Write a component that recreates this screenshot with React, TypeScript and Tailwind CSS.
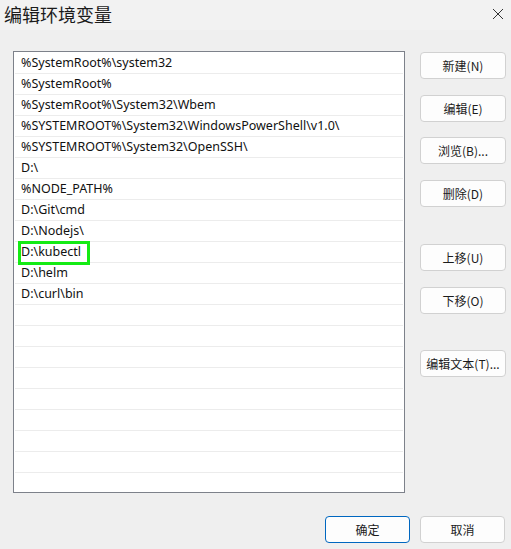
import React from "react";

const rows = [
  "%SystemRoot%\\system32",
  "%SystemRoot%",
  "%SystemRoot%\\System32\\Wbem",
  "%SYSTEMROOT%\\System32\\WindowsPowerShell\\v1.0\\",
  "%SYSTEMROOT%\\System32\\OpenSSH\\",
  "D:\\",
  "%NODE_PATH%",
  "D:\\Git\\cmd",
  "D:\\Nodejs\\",
  "D:\\kubectl",
  "D:\\helm",
  "D:\\curl\\bin",
];

const allRows = [...rows, ...Array(21 - rows.length).fill("")];

function Btn({ label, className = "" }: { label: string; className?: string }) {
  return (
    <div
      className={`h-[27px] w-[86px] flex items-center justify-center rounded-[4px] border border-[#d1d1d1] bg-[#fdfdfd] text-[12px] text-[#1b1b1b] ${className}`}
    >
      {label}
    </div>
  );
}

export default function App() {
  return (
    <div
      className="w-[511px] h-[549px] bg-[#efefef] flex flex-col overflow-hidden"
      style={{ fontFamily: '"Noto Sans", "Noto Sans CJK SC", sans-serif' }}
    >
      <div className="h-[30px] bg-[#f2f2f2] flex items-center justify-between pl-[4px] pr-[4px]">
        <span className="text-[18px] leading-none text-[#1b1b1b] -mt-[2px]" style={{ fontFamily: '"Noto Sans CJK SC", sans-serif' }}>
          编辑环境变量
        </span>
        <svg width="12" height="12" viewBox="0 0 12 12" className="mr-[3px] -mt-[2px]">
          <path d="M1 1 L11 11 M11 1 L1 11" stroke="#333" strokeWidth="1" />
        </svg>
      </div>
      <div className="flex pt-[21px] pl-[13px]">
        <div className="relative w-[392px] h-[442px] border border-[#7d818a] bg-white pt-[1px] overflow-hidden">
          {allRows.map((r, i) => (
            <div
              key={i}
              className="h-[21px] mx-[1px] border-b border-[#ececec] pl-[6px] pt-[1px] flex items-center text-[12.5px] text-[#111] whitespace-nowrap"
            >
              {r}
            </div>
          ))}
          <div className="absolute left-[4px] top-[189px] w-[72px] h-[24px] border-[3px] border-[#14eb14]" />
        </div>
        <div className="ml-[15px] flex flex-col pt-[1px]" style={{ fontFamily: '"Noto Sans CJK SC", sans-serif' }}>
          <Btn label="新建(N)" />
          <Btn label="编辑(E)" className="mt-[16px]" />
          <Btn label="浏览(B)..." className="mt-[15px]" />
          <Btn label="删除(D)" className="mt-[16px]" />
          <Btn label="上移(U)" className="mt-[37px]" />
          <Btn label="下移(O)" className="mt-[16px]" />
          <Btn label="编辑文本(T)..." className="mt-[36px]" />
        </div>
      </div>
      <div className="flex justify-end pr-[6px] mt-[23px] gap-[10px]" style={{ fontFamily: '"Noto Sans CJK SC", sans-serif' }}>
        <div className="h-[27px] w-[85px] flex items-center justify-center rounded-[4px] border border-[#0067c0] bg-[#fdfdfd] text-[12px] text-[#1b1b1b]">
          确定
        </div>
        <div className="h-[27px] w-[85px] flex items-center justify-center rounded-[4px] border border-[#d1d1d1] bg-[#fdfdfd] text-[12px] text-[#1b1b1b]">
          取消
        </div>
      </div>
    </div>
  );
}
